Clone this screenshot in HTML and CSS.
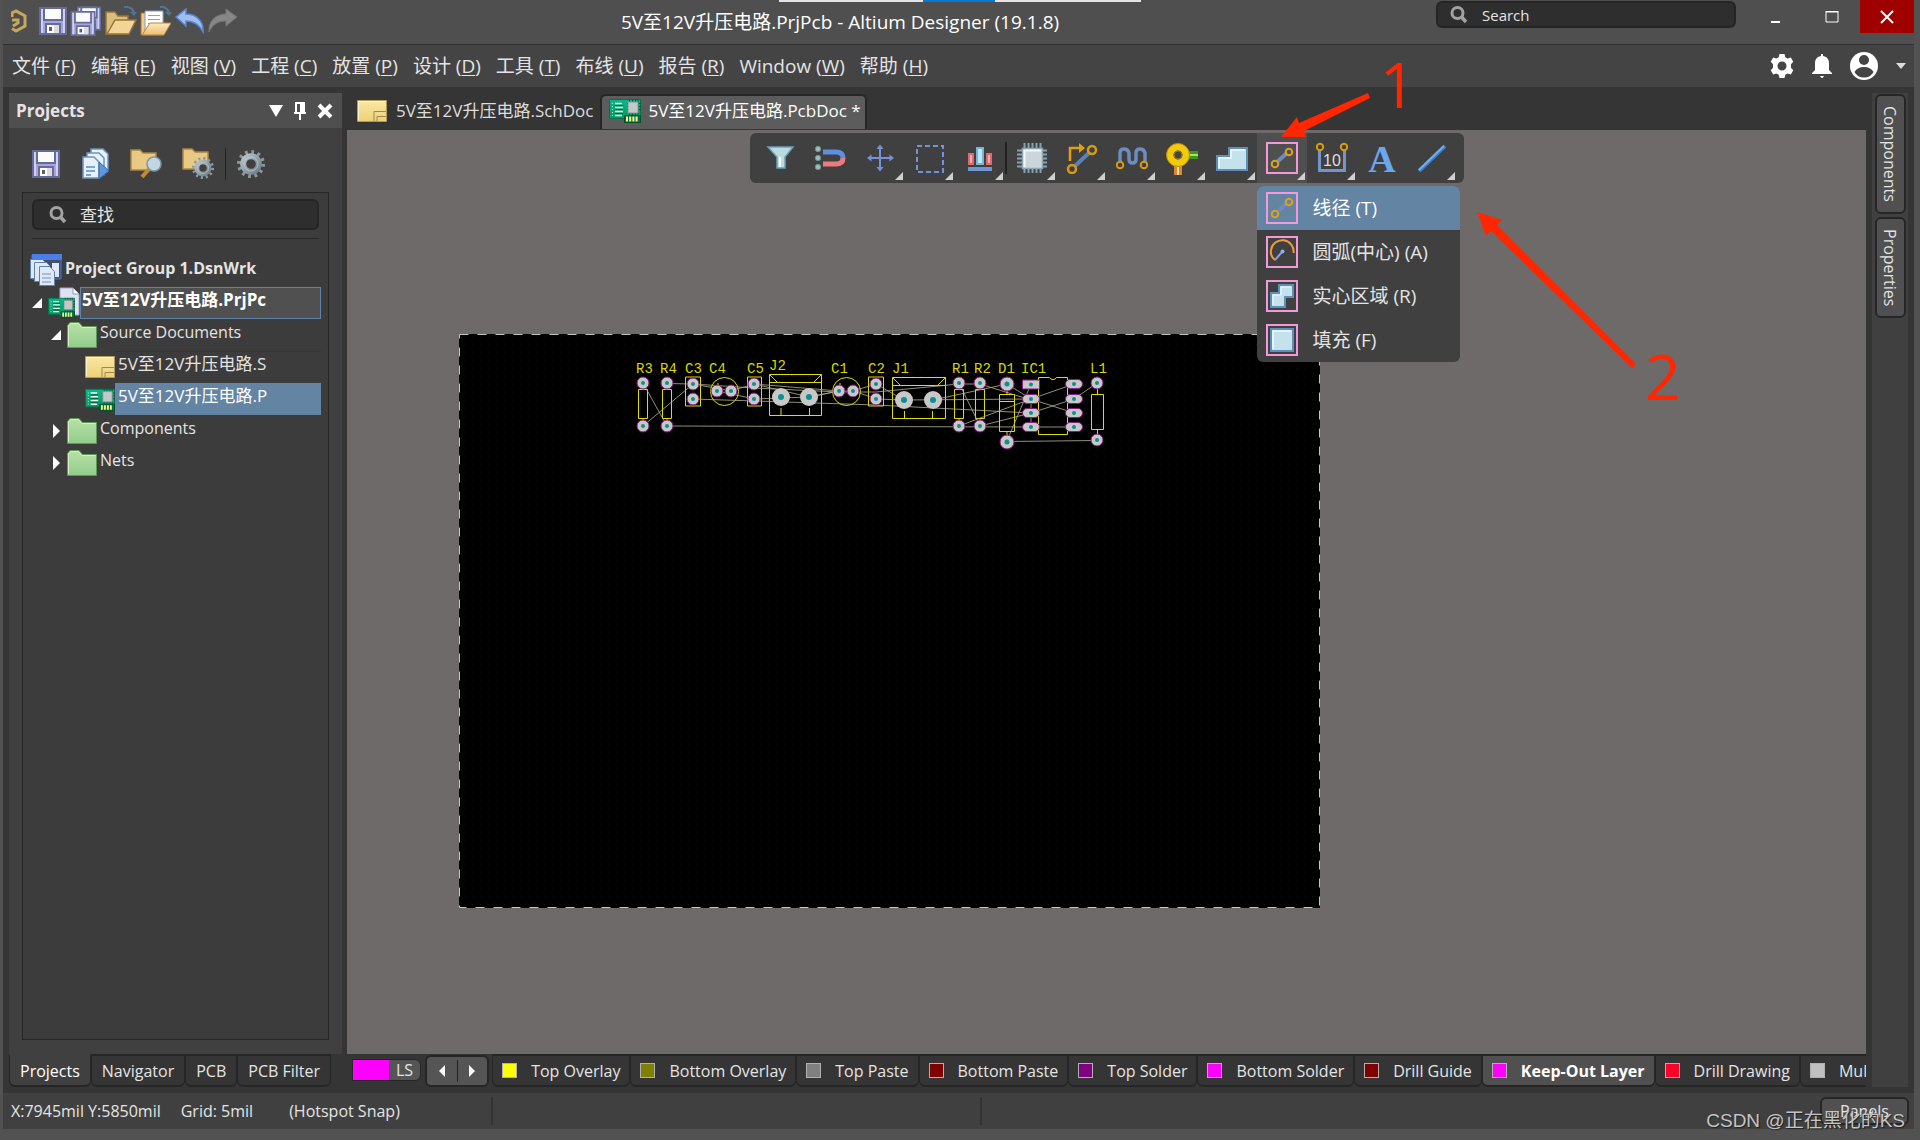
FILE: index.html
```html
<!DOCTYPE html>
<html lang="zh-CN">
<head>
<meta charset="utf-8">
<title>5V至12V升压电路.PrjPcb - Altium Designer (19.1.8)</title>
<link rel="stylesheet" href="styles.css">
</head>
<body>
<svg class="defs" aria-hidden="true">
  <defs>
    <linearGradient id="gSheet" x1="0" y1="0" x2="0" y2="1"><stop offset="0" stop-color="#f8e6a6"/><stop offset="1" stop-color="#edd274"/></linearGradient>
    <linearGradient id="gFolder" x1="0" y1="0" x2="0" y2="1"><stop offset="0" stop-color="#b7dfa8"/><stop offset="1" stop-color="#92cd8a"/></linearGradient>
    <linearGradient id="gPcb" x1="0" y1="0" x2="0" y2="1"><stop offset="0" stop-color="#0cb58c"/><stop offset="1" stop-color="#059a5c"/></linearGradient>
    <linearGradient id="gOpen" x1="0" y1="0" x2="0" y2="1"><stop offset="0" stop-color="#fbe9bd"/><stop offset="1" stop-color="#eebd73"/></linearGradient>
    <linearGradient id="gGear" x1="0" y1="0" x2="1" y2="1"><stop offset="0" stop-color="#b6c2c8"/><stop offset="1" stop-color="#6f8088"/></linearGradient>
    <symbol id="i-save" viewBox="0 0 28 28">
      <path d="M1 1h26v26H1z" fill="#aaa2dc" stroke="#646c98" stroke-width="2"/>
      <path d="M3 2v24M25 2v24" stroke="#d3cdf2" stroke-width="2"/>
      <path d="M5 1h18v12H5z" fill="#fbfbfb" stroke="#646c98" stroke-width="2"/>
      <path d="M7 17h14v10H7z" fill="#fff" stroke="#646c98" stroke-width="2"/>
      <path d="M15 18h5v8h-5z" fill="#dcdcdc"/><path d="M10 20h3v4h-3z" fill="#565e88"/>
    </symbol>
    <symbol id="i-sheet" viewBox="0 0 30 22">
      <path d="M.5.5h29v21H.5z" fill="url(#gSheet)" stroke="#b19b5c"/>
      <path d="M1.500 20V1.500H28" stroke="#fdf3cc" fill="none"/>
      <path d="M17 21v-9.500h12M20 21v-4.500h9" stroke="#a08a4c" fill="none"/>
    </symbol>
    <symbol id="i-pcb" viewBox="0 0 32 25">
      <path d="M.5 1.500h31v19H.5z" fill="url(#gPcb)" stroke="#04724a"/>
      <path d="M3.500 5v14" stroke="#d9fff0" stroke-dasharray="1 2"/>
      <path d="M6 5.500h7M6 9.500h8M6 13.500h8M6 17.500h7" stroke="#eafff6" stroke-width="1.500"/>
      <path d="M6 7.500h8M6 11.500h8M6 15.500h8" stroke="#03583a"/>
      <path d="M20.500 1v18M23.500 1v18M26.500 1v18M29 1v18M18 5.500h14M18 8.500h14M18 11.500h14" stroke="#03583a"/>
      <path d="M19 4h10v11H19z" fill="#c3c9c9" stroke="#8a9494"/>
      <path d="M15.500 17.500h16v7h-16z" fill="#017143" stroke="#024f30"/>
      <path d="M18 18.500v5M21.200 18.500v5M24.400 18.500v5M27.600 18.500v5" stroke="#fbf58a" stroke-width="2"/>
    </symbol>
    <symbol id="i-folder" viewBox="0 0 30 26">
      <path d="M.5 25.500V3.500L3 .5h9l3.500 4h14v21z" fill="url(#gFolder)" stroke="#5d9a57"/>
      <path d="M1.500 24V4l2-2.500h8l3.500 4h13.500" fill="none" stroke="#d3efc6"/>
    </symbol>
    <symbol id="i-search" viewBox="0 0 18 18">
      <circle cx="7.500" cy="7" r="5.500" fill="none" stroke="#a2a2a2" stroke-width="3"/>
      <path d="M11.500 11l4.500 5" stroke="#a2a2a2" stroke-width="3.500"/>
    </symbol>
    <symbol id="i-gear" viewBox="0 0 28 28">
      <circle cx="14" cy="14" r="12" fill="none" stroke="#8b9aa1" stroke-width="4" stroke-dasharray="2.700 3.580"/>
      <circle cx="14" cy="14" r="7.800" fill="none" stroke="url(#gGear)" stroke-width="6"/>
      <circle cx="14" cy="14" r="7" fill="none" stroke="#c6d0d5" stroke-width="1" opacity=".7"/>
    </symbol>
    <symbol id="i-track" viewBox="0 0 32 32">
      <path d="M1 1h30v30H1z" fill="none" stroke="#f19ad9" stroke-width="2"/>
      <path d="M11 20L21 11" stroke="#6d8dbd" stroke-width="4"/>
      <circle cx="23" cy="10" r="3.300" fill="none" stroke="#dca01c" stroke-width="2"/>
      <circle cx="9" cy="22" r="3.300" fill="none" stroke="#dca01c" stroke-width="2"/>
    </symbol>
  </defs>
</svg>

<div class="app">
  <div class="top-strip" aria-hidden="true"><span></span></div>
  <header class="titlebar">
    <div class="quick">
      <svg class="logo" viewBox="0 0 16 24" fill="none" stroke="#c5a75e" stroke-width="3"><path d="M1 8V4l4-2 9 5v10l-9 5-4-2.500"/><path d="M1 11h6v3l-5 3"/></svg>
      <button aria-label="保存"><svg width="28" height="28"><use href="#i-save"/></svg></button>
      <button aria-label="全部保存"><svg width="32" height="30"><use href="#i-save" x="7" y="0" width="24" height="25"/><use href="#i-save" x="0" y="5" width="26" height="25"/></svg></button>
      <button aria-label="打开"><svg width="32" height="30" viewBox="0 0 32 30"><path d="M1 28V6h9l3 4h10v18z" fill="#dcbd7c" stroke="#94763a" stroke-width="1.500"/><path d="M2 28L10 14h21l-7 14z" fill="#f2d596" stroke="#94763a" stroke-width="1.500"/><path d="M19 1q8-1 10 6" fill="none" stroke="#4e7596" stroke-width="2"/><path d="M25 6h7l-3 4z" fill="#4e7596"/></svg></button>
      <button aria-label="打开工程"><svg width="32" height="30" viewBox="0 0 32 30"><path d="M1 29V7h22v22z" fill="#f0c987" stroke="#a5752f"/><path d="M5 5h18v20H5z" fill="#fff" stroke="#8b98bd"/><path d="M8 9.500h12M8 13.500h12M8 17.500h12" stroke="#8e9cc8"/><path d="M2 29L10 17h21l-7 12z" fill="url(#gOpen)" stroke="#b9873d"/><path d="M20 1q7-1 9 6" fill="none" stroke="#4e7596" stroke-width="2"/><path d="M25 6h7l-3 4z" fill="#4e7596"/></svg></button>
      <button aria-label="撤销"><svg width="30" height="26" viewBox="0 0 30 26"><path d="M1 9L11 1v5c11 0 18 8 17 18-4-8-9-11-17-11v5z" fill="#9cbdee" stroke="#5b84cf" stroke-width="1.500"/></svg></button>
      <button aria-label="重做"><svg width="30" height="26" viewBox="0 0 30 26"><path d="M29 9L18 1v5C7 6 0 14 1 24c4-8 9-11 17-11v5z" fill="#868686" stroke="#747474"/></svg></button>
    </div>
    <h1 class="title">5V至12V升压电路.PrjPcb - Altium Designer (19.1.8)</h1>
    <label class="search title-search"><svg width="18" height="18"><use href="#i-search"/></svg><input type="text" placeholder="Search" aria-label="Search"></label>
    <div class="winbtns">
      <button aria-label="最小化"><svg width="14" height="14"><path d="M2 11h9v2H2z" fill="#fff"/></svg></button>
      <button aria-label="最大化"><svg width="14" height="14"><path d="M1 2h12v10H1z" fill="none" stroke="#fff"/><path d="M.5 1.500h13" stroke="#fff"/></svg></button>
      <button class="close" aria-label="关闭"><svg width="14" height="14"><path d="M1 1l12 12M13 1L1 13" stroke="#fff" stroke-width="2"/></svg></button>
    </div>
  </header>

  <nav class="menubar">
    <button>文件 (<u>F</u>)</button><button>编辑 (<u>E</u>)</button><button>视图 (<u>V</u>)</button><button>工程 (<u>C</u>)</button><button>放置 (<u>P</u>)</button><button>设计 (<u>D</u>)</button><button>工具 (<u>T</u>)</button><button>布线 (<u>U</u>)</button><button>报告 (<u>R</u>)</button><button>Window (<u>W</u>)</button><button>帮助 (<u>H</u>)</button>
    <div class="account">
      <button aria-label="设置"><svg width="24" height="24" viewBox="0 0 24 24"><path fill="#fff" fill-rule="evenodd" d="M9.500 0h5l.8 3.200 2.300 1.300 3.200-1 2.500 4.300L21 10.200v3.600l2.300 2.400-2.500 4.300-3.200-1-2.300 1.300-.8 3.200h-5l-.8-3.200-2.300-1.300-3.200 1L.7 16.200 3 13.800v-3.600L.7 7.800l2.500-4.300 3.200 1 2.300-1.300zM12 7.500a4.500 4.500 0 100 9 4.500 4.500 0 000-9z"/></svg></button>
      <button aria-label="通知"><svg width="20" height="24" viewBox="0 0 20 24"><path fill="#fff" d="M9 0h2v2c5 1 6 4 6 8v6l3 3v1H0v-1l3-3v-6c0-4 1-7 6-8zM8 22h4q-2 4-4 0z"/></svg></button>
      <button aria-label="帐户"><svg width="28" height="28" viewBox="0 0 28 28"><circle cx="14" cy="14" r="14" fill="#fff"/><circle cx="14" cy="8" r="5" fill="#444"/><path d="M4.500 20q3-5 9.500-5t9.500 5q-3 5.500-9.500 5.500T4.500 20z" fill="#444"/></svg></button>
      <button aria-label="帐户菜单"><svg width="10" height="6"><path d="M0 0h10L5 6z" fill="#ddd"/></svg></button>
    </div>
  </nav>

  <main class="work">
    <aside class="left">
      <section class="panel">
        <div class="panel-head">
          <h2>Projects</h2>
          <button aria-label="菜单"><svg width="14" height="12"><path d="M0 0h14L7 12z" fill="#fff"/></svg></button>
          <button aria-label="固定"><svg width="12" height="18"><path d="M1 0h10v10h1v2H7v6H5v-6H0v-2h1zM3 2v8h3V2z" fill="#fff" fill-rule="evenodd"/></svg></button>
          <button aria-label="关闭面板"><svg width="16" height="16"><path d="M2 2l12 12M14 2L2 14" stroke="#fff" stroke-width="4"/></svg></button>
        </div>
        <div class="panel-tools">
          <button aria-label="保存文档"><svg width="28" height="28"><use href="#i-save"/></svg></button>
          <button aria-label="编译工程"><svg width="30" height="32" viewBox="-2 0 30 32"><g fill="#e6f1f9" stroke="#6d93bd" stroke-width="1.500"><path d="M9 1h12l5 5v17H9z"/><path d="M5 5h12l5 5v17H5z"/><path d="M1 9h11l5 5v16H1z"/></g><path d="M4 19h9M4 23h9M4 27h5" stroke="#5b8ec2" stroke-width="1.500"/><path d="M17 14l10 9-10 8z" fill="#5f97dc" stroke="#3465a8"/></svg></button>
          <button aria-label="浏览"><svg width="32" height="30" viewBox="0 0 32 30"><path d="M1 21V1h9l3 3h13v17z" fill="#eac983" stroke="#a88548" stroke-width="1.500"/><path d="M20 19l-8 9" stroke="#c0883a" stroke-width="4"/><circle cx="24" cy="15" r="7" fill="#c3d6e4" stroke="#7f95a5" stroke-width="1.500"/></svg></button>
          <button aria-label="工程选项"><svg width="32" height="32" viewBox="0 0 32 32"><path d="M1 21V1h9l3 3h13v17z" fill="#eac983" stroke="#a88548" stroke-width="1.500"/><circle cx="21" cy="20" r="4" fill="#404040"/><use href="#i-gear" x="10" y="9" width="22" height="22"/></svg></button>
          <i class="vline"></i>
          <button aria-label="设置"><svg width="28" height="28"><use href="#i-gear"/></svg></button>
        </div>
        <div class="panel-body">
          <label class="search"><svg width="18" height="18"><use href="#i-search"/></svg><input type="text" placeholder="查找" aria-label="查找"></label>
          <ul class="tree">
            <li class="row group"><svg class="ic" width="32" height="32" viewBox="0 0 32 32"><path d="M2 1h29v24H2z" fill="#44506a" stroke="#4a78d4"/><path d="M2 0h30v6H2z" fill="#4b7fe6"/><path d="M22 9h7v14h-7z" fill="#dfe8f4"/><g fill="#dfe9f5" stroke="#6282ac"><path d="M.5 5.500h12l3 3v16H.5z"/><path d="M4.500 8.500h12l3 3v16h-15z"/><path d="M9.500 12.500h10l5 5v14h-15z"/></g><path d="M12 20h9M12 24h9M12 28h9" stroke="#6d8fc0"/></svg><span class="name">Project Group 1.DsnWrk</span></li>
            <li class="row l1"><svg class="tw" width="10" height="10"><path d="M10 0v10H0z" fill="#fff"/></svg><svg class="ic" width="32" height="32" viewBox="0 0 32 32"><path d="M12 1h13l6 6v21H12z" fill="#dde3f3" stroke="#a4acc8"/><path d="M25 1v6h6" fill="#fff" stroke="#8e96b8"/><use href="#i-pcb" x="0" y="10" width="27" height="21"/></svg><span class="name selbox"><span>5V至12V升压电路.PrjPcb</span></span></li>
            <li class="row l2"><svg class="tw" width="10" height="10"><path d="M10 0v10H0z" fill="#fff"/></svg><svg class="ic" width="30" height="26"><use href="#i-folder"/></svg><span class="name">Source Documents</span></li>
            <li class="row l3"><svg class="ic" width="30" height="22"><use href="#i-sheet"/></svg><span class="name"><span>5V至12V升压电路.SchDoc</span></span></li>
            <li class="row l3"><svg class="ic" width="30" height="25"><use href="#i-pcb"/></svg><span class="name active"><span>5V至12V升压电路.PcbDoc</span></span></li>
            <li class="row l2"><svg class="tw" width="10" height="14"><path d="M2 0l7 7-7 7z" fill="#fff"/></svg><svg class="ic" width="30" height="26"><use href="#i-folder"/></svg><span class="name">Components</span></li>
            <li class="row l2"><svg class="tw" width="10" height="14"><path d="M2 0l7 7-7 7z" fill="#fff"/></svg><svg class="ic" width="30" height="26"><use href="#i-folder"/></svg><span class="name">Nets</span></li>
          </ul>
        </div>
      </section>
      <div class="tabs-bottom"><button class="on">Projects</button><button>Navigator</button><button>PCB</button><button>PCB Filter</button></div>
    </aside>

    <section class="center">
      <div class="doctabs">
        <button><svg width="30" height="22"><use href="#i-sheet"/></svg>5V至12V升压电路.SchDoc</button>
        <button class="on"><svg width="32" height="25"><use href="#i-pcb"/></svg>5V至12V升压电路.PcbDoc *</button>
      </div>
      <div class="canvas">
        <svg class="board" width="861" height="574" viewBox="459 334 861 574">
          <defs>
            <pattern id="dots" width="8" height="8" patternUnits="userSpaceOnUse"><path d="M0 0h1v1H0z" fill="#0d0d0d"/></pattern>
            <g id="pad"><circle r="6" fill="#c8c8c8" stroke="#8a1a8a"/><circle r="2" fill="#0a9090"/></g>
            <g id="padL"><circle r="9" fill="#c8c8c8"/><circle r="3" fill="#0a9090"/></g>
            <g id="padM"><circle r="7" fill="#c8c8c8" stroke="#8a1a8a"/><circle r="2.500" fill="#0a9090"/></g>
            <g id="padO"><rect x="-8.500" y="-4.500" width="17" height="9" rx="4.500" fill="#c8c8c8" stroke="#8a1a8a"/><circle r="2" fill="#0a9090"/></g>
          </defs>
          <path d="M459 334h861v574H459z" fill="#000"/>
          <path d="M459 334h861v574H459z" fill="url(#dots)"/>
          <path d="M459.500 334.500h860v573h-860z" fill="none" stroke="#c4c4c4" stroke-dasharray="9 9"/>
          <g fill="none" stroke="#dede00">
            <path d="M638.500 389.500h9v29h-9zM643 383v6M643 419v6M662.500 389.500h9v29h-9zM667 383v6M667 419v6"/>
            <path d="M685.500 377h15v29h-15zM747.500 377h14v29h-14zM868.500 377h15v29h-15z"/>
            <circle cx="724.500" cy="391.500" r="14"/><circle cx="846.500" cy="391.500" r="14"/>
            <path d="M718 383v3M840 383v3"/>
            <path d="M769.500 374.500h52v41h-52zM769.500 382.500h52M769.500 374.500l8 8M821.500 374.500l-8 8M781 408v7M809.500 408v7"/>
            <path d="M892.500 377.500h53v41h-53zM892.500 385.500h53M892.500 377.500l8 8M945.500 377.500l-8 8M904.500 411v7M932.500 411v7"/>
            <path d="M954.500 389.500h9v29h-9zM959 383v6M959 419v6M975.500 389.500h9v29h-9zM980 383v6M980 419v6"/>
            <path d="M999.500 394.500h15v37h-15zM999.500 401.500h15M1007 389v5M1007 432v5"/>
            <path d="M1038.500 377.500h11a4 4 0 007 0h11v57h-29z"/>
            <path d="M1091.500 394.500h12v35h-12zM1097.500 388v6M1097.500 430v6"/>
          </g>
          <g fill="none" stroke="#b4b48c" stroke-opacity=".8">
            <path d="M643 383l24 43M643 426l50-42M667 383.500l26 .5 61 4 85 4 37 0 83-8 21 0 51 16M693 384l38 7 23-7 55 13 30-6 14 0 23-7 28 16M693 399l62 2 121 4 155 8M717 391l38 8 54-2 30-6M854 391l22 8 28 1 127-1M754 384l85 7M933 400l74-16M667 426l364 1M1031 427h43M959 383l21 43M959 426l72-27 43-15M980 426l51-13 43-14 23-16M1031 399l43 14M1031 384l-24 57M1007 384l24 15v28M1007 441.500l90-1"/>
          </g>
          <use href="#pad" x="643" y="383"/><use href="#pad" x="643" y="426"/><use href="#pad" x="667" y="383"/><use href="#pad" x="667" y="426"/>
          <use href="#pad" x="693" y="384"/><use href="#pad" x="693" y="399"/><use href="#pad" x="717" y="391"/><use href="#pad" x="731" y="391"/>
          <use href="#pad" x="754" y="384"/><use href="#pad" x="754" y="399"/><use href="#padL" x="781" y="397"/><use href="#padL" x="809" y="397"/>
          <use href="#pad" x="839" y="391"/><use href="#pad" x="853" y="391"/><use href="#pad" x="876" y="384"/><use href="#pad" x="876" y="399"/>
          <use href="#padL" x="904" y="400"/><use href="#padL" x="933" y="400"/>
          <use href="#pad" x="959" y="383"/><use href="#pad" x="959" y="426"/><use href="#pad" x="980" y="383"/><use href="#pad" x="980" y="426"/>
          <use href="#padM" x="1007" y="384"/><use href="#padM" x="1007" y="442"/>
          <path d="M1022.500 380h17v9h-17z" fill="#c8c8c8" stroke="#8a1a8a"/><circle cx="1031" cy="384.500" r="2" fill="#0a9090"/>
          <use href="#padO" x="1031" y="399"/><use href="#padO" x="1031" y="413"/><use href="#padO" x="1031" y="427"/>
          <use href="#padO" x="1074" y="384"/><use href="#padO" x="1074" y="399"/><use href="#padO" x="1074" y="413"/><use href="#padO" x="1074" y="427"/>
          <use href="#pad" x="1097" y="383"/><use href="#pad" x="1097" y="440"/>
          <g class="ref">
            <text x="636" y="373">R3</text><text x="660" y="373">R4</text><text x="685" y="373">C3</text><text x="709" y="373">C4</text><text x="747" y="373">C5</text><text x="769" y="370">J2</text><text x="831" y="373">C1</text><text x="868" y="373">C2</text><text x="892" y="373">J1</text><text x="952" y="373">R1</text><text x="974" y="373">R2</text><text x="998" y="373">D1</text><text x="1021" y="373">IC1</text><text x="1090" y="373">L1</text>
          </g>
        </svg>

        <div class="toolbar">
          <button aria-label="过滤器"><svg width="32" height="32" viewBox="0 0 32 32"><path d="M4 5h25l-8 10v11h-8V15z" fill="#b9dbe0" stroke="#6fa0b8" stroke-width="1.500"/><path d="M16 15v10" stroke="#f2ffff" stroke-width="2"/></svg></button>
          <button aria-label="捕捉"><svg width="32" height="32" viewBox="0 0 32 32"><g fill="#9cbcbc" stroke="#6c9090"><circle cx="4" cy="7" r="2.700"/><circle cx="4" cy="16" r="2.700"/><circle cx="4" cy="25" r="2.700"/></g><path d="M9 10h13q7 0 7 6" fill="none" stroke="#5d8ee0" stroke-width="5"/><path d="M9 22h13q7 0 7-6" fill="none" stroke="#ec7a7e" stroke-width="5"/></svg></button>
          <button class="more" aria-label="移动"><svg width="32" height="32" viewBox="0 0 32 32"><path d="M16 5v23M5 16h23" stroke="#7492dc" stroke-width="2"/><path d="M16 2.500l3.500 4.500h-7zM16 29.500l3.500-4.500h-7zM3 16l4.500-3.500v7zM30 16l-4.500-3.500v7z" fill="#7492dc"/></svg></button>
          <button class="more" aria-label="选择"><svg width="32" height="32" viewBox="0 0 32 32"><path d="M3 4h26v26H3z" fill="none" stroke="#7492dc" stroke-width="2" stroke-dasharray="5 3"/></svg></button>
          <button class="more" aria-label="对齐"><svg width="32" height="32" viewBox="0 0 32 32"><path d="M5 12h4v10H5zM23 12h4v10h-4z" fill="#f7adaf" stroke="#e0696d" stroke-width="2"/><path d="M13 6h6v16h-6z" fill="#bfe6f5" stroke="#78b4d8" stroke-width="2"/><path d="M4 25h24v4H4z" fill="#6f97d8"/></svg></button>
          <i class="vline"></i>
          <button class="more" aria-label="器件"><svg width="32" height="32" viewBox="0 0 32 32"><path d="M8.500 1v30M12.500 1v30M16.500 1v30M20.500 1v30M24.500 1v30M1 8.500h30M1 12.500h30M1 16.500h30M1 20.500h30M1 24.500h30" stroke="#85a3b3" stroke-width="2"/><path d="M6.500 6.500h20v20h-20z" fill="#ccd4dc" stroke="#90a4ae" stroke-width="1.500"/><path d="M8.500 25V8.500H25" fill="none" stroke="#f2f7fa" stroke-width="2"/></svg></button>
          <button class="more" aria-label="布线"><svg width="32" height="32" viewBox="0 0 32 32"><path d="M9 24L24 10" stroke="#5c7fb4" stroke-width="4"/><circle cx="26" cy="8" r="4" fill="none" stroke="#d99c10" stroke-width="2.500"/><circle cx="6" cy="27" r="4" fill="none" stroke="#d99c10" stroke-width="2.500"/><path d="M4 19V6h11" fill="none" stroke="#e0a010" stroke-width="2.500"/><path d="M13 1l6 5-6 5z" fill="#e0a010"/></svg></button>
          <button class="more" aria-label="长度调整"><svg width="32" height="32" viewBox="0 0 32 32"><path d="M4 20V11q0-4 4-4t5 4v6q0 4 3.500 4t3.500-4v-6q0-4 4-4t5 4v9" fill="none" stroke="#6c8dbe" stroke-width="3.500"/><circle cx="4" cy="23" r="3.300" fill="#404040" stroke="#d99c10" stroke-width="2"/><circle cx="28" cy="23" r="3.300" fill="#404040" stroke="#d99c10" stroke-width="2"/></svg></button>
          <button class="more" aria-label="过孔"><svg width="32" height="34" viewBox="0 0 32 34"><path d="M8 22h8v12H8z" fill="#d98a2c"/><path d="M11 22h2v12h-2z" fill="#fbdcae"/><path d="M22 10h10v8H22z" fill="#3c9a14"/><path d="M22 13h10v2H22z" fill="#a8e07a"/><circle cx="12" cy="14" r="8" fill="none" stroke="#f2ca0a" stroke-width="7"/><circle cx="12" cy="14" r="11.500" fill="none" stroke="#c08c06"/><circle cx="12" cy="14" r="4" fill="#444" stroke="#a47a06"/></svg></button>
          <button class="more" aria-label="铺铜"><svg width="32" height="32" viewBox="0 0 32 32"><path d="M1 28V14h12V6h18v22z" fill="#c3e2ec" stroke="#5f8fb8" stroke-width="2"/><path d="M3 26V16h12V8h14" fill="none" stroke="#f0fbff" stroke-width="1.500"/></svg></button>
          <div class="drop">
            <button class="more open" aria-label="放置线径"><svg width="32" height="32"><use href="#i-track"/></svg></button>
            <div class="menu">
              <button class="hot"><svg width="32" height="32"><use href="#i-track"/></svg>线径 (T)</button>
              <button><svg width="32" height="32" viewBox="0 0 32 32"><path d="M1 1h30v30H1z" fill="none" stroke="#f19ad9" stroke-width="2"/><path d="M9 24Q4 20 5 14A11 11 0 0127.500 17" fill="none" stroke="#ec9a3c" stroke-width="2"/><path d="M16 16l-7 8" stroke="#7f9fe4" stroke-width="2"/><circle cx="16.500" cy="15.500" r="2" fill="#8fb0f0"/></svg>圆弧(中心) (A)</button>
              <button><svg width="32" height="32" viewBox="0 0 32 32"><path d="M1 1h30v30H1z" fill="none" stroke="#f19ad9" stroke-width="2"/><path d="M5 27V13h8V5h14v12h-8v10z" fill="#c3e2ec" stroke="#5f8fb8" stroke-width="2"/><path d="M7 25V15h8V7h10" fill="none" stroke="#f0fbff"/></svg>实心区域 (R)</button>
              <button><svg width="32" height="32" viewBox="0 0 32 32"><path d="M1 1h30v30H1z" fill="none" stroke="#f19ad9" stroke-width="2"/><path d="M5 5h22v22H5z" fill="#c3e2ec" stroke="#5f8fb8" stroke-width="2"/><path d="M7 25V7h18" fill="none" stroke="#f0fbff" stroke-width="1.500"/></svg>填充 (F)</button>
            </div>
          </div>
          <button class="more" aria-label="尺寸"><svg width="32" height="32" viewBox="0 0 32 32"><path d="M3.500 8v20.500h25V8" fill="none" stroke="#7396c8" stroke-width="3"/><circle cx="4" cy="5" r="3.200" fill="#404040" stroke="#d99c10" stroke-width="2"/><circle cx="28" cy="5" r="3.200" fill="#404040" stroke="#d99c10" stroke-width="2"/><text x="16" y="24" class="dim">10</text></svg></button>
          <button aria-label="字符串"><svg width="32" height="32" viewBox="0 0 32 32"><text x="16" y="30" class="bigA">A</text></svg></button>
          <button class="more" aria-label="直线"><svg width="32" height="32" viewBox="0 0 32 32"><path d="M3 29L29 4" stroke="#3d7cc4" stroke-width="4"/><path d="M3 28L28 4" stroke="#74aef0" stroke-width="2"/></svg></button>
          <svg class="notes" width="760" height="360" viewBox="1249 60 760 360" aria-hidden="true">
            <path d="M1281 137l16-20 2 6 69-30 2 5-66 33 2 6zM1477 212l25 8-5 5 139 139-4 4-141-137-5 5z"/>
            <text x="1380" y="108">1</text><text x="1645" y="400">2</text>
          </svg>
        </div>
      </div>
      <div class="layers">
        <button class="ls"><i></i><span>LS</span></button>
        <div class="nav"><button aria-label="上一层"><svg width="8" height="14"><path d="M7 1v12L1 7z" fill="#fff"/></svg></button><i class="vline"></i><button aria-label="下一层"><svg width="8" height="14"><path d="M1 1v12l6-6z" fill="#fff"/></svg></button></div>
        <div class="layertabs">
          <button><i class="c-yellow"></i>Top Overlay</button><button><i class="c-olive"></i>Bottom Overlay</button><button><i class="c-gray"></i>Top Paste</button><button><i class="c-maroon"></i>Bottom Paste</button><button><i class="c-purple"></i>Top Solder</button><button><i class="c-magenta"></i>Bottom Solder</button><button><i class="c-maroon"></i>Drill Guide</button><button class="on"><i class="c-magenta"></i>Keep-Out Layer</button><button><i class="c-red"></i>Drill Drawing</button><button><i class="c-silver"></i>Multi-Layer</button>
        </div>
      </div>
    </section>

    <aside class="right"><button>Components</button><button>Properties</button></aside>
  </main>

  <footer class="status">
    <div class="cell first"><span class="coord">X:7945mil Y:5850mil</span><span class="grid">Grid: 5mil</span><span>(Hotspot Snap)</span></div>
    <div class="cell second"></div>
    <button class="panels">Panels</button>
    <div class="watermark">CSDN @正在黑化的KS</div>
  </footer>
</div>
</body>
</html>
```
FILE: styles.css
```css
* { box-sizing: border-box; }
body {
  margin: 0;
  background: #4f4f4f;
  color: #e4e4e4;
  font: 16px/24px "Open Sans", "Noto Sans CJK SC", sans-serif;
}
button {
  display: flex;
  align-items: center;
  justify-content: center;
  margin: 0;
  padding: 0;
  border: 0;
  background: none;
  color: inherit;
  font: inherit;
  white-space: nowrap;
}
svg { display: block; flex: none; }
h1, h2 { margin: 0; font-size: inherit; }
.defs { position: absolute; width: 0; height: 0; }
.app {
  position: relative;
  display: flex;
  flex-direction: column;
  min-height: 100vh;
  border: solid #525252;
  border-width: 0 6px 11px 3px;
  background: #353535;
}
.top-strip {
  position: absolute;
  top: 0;
  left: 776px;
  width: 362px;
  height: 2px;
  background: #e4e4e4;
}
.top-strip span {
  display: block;
  width: 72px;
  height: 2px;
  margin-left: 144px;
  background: #0a78d6;
}

/* Title bar */
.titlebar {
  display: flex;
  align-items: flex-start;
  height: 45px;
  background: #4f4f4f;
  border-bottom: 1px solid #303030;
}
.quick { display: flex; align-items: center; gap: 3px; height: 42px; padding-left: 8px; }
.logo { width: 16px; height: 24px; margin-right: 9px; }
.title {
  flex: 1;
  padding-left: 6px;
  text-align: center;
  font-weight: 400;
  font-size: 19px;
  line-height: 44px;
  white-space: nowrap;
  color: #fff;
}
.search {
  display: flex;
  align-items: center;
  height: 31px;
  padding-left: 15px;
  gap: 13px;
  background: #2e2e2e;
  border: 2px solid #252525;
  border-radius: 6px;
}
.search input {
  flex: 1;
  min-width: 0;
  padding: 0;
  border: 0;
  background: none;
  color: #e4e4e4;
  font: inherit;
  font-size: 17px;
  outline: 0;
}
.search input::placeholder { color: #e4e4e4; opacity: 1; }
.title-search { width: 300px; height: 27px; margin-top: 1px; padding-left: 12px; gap: 14px; }
.title-search input { font-size: 15px; line-height: 20px; }
.winbtns { display: flex; margin-left: 12px; }
.winbtns button { width: 56px; height: 33px; }
.winbtns .close { width: 54px; background: #a00000; }

/* Menu bar */
.menubar {
  display: flex;
  align-items: center;
  gap: 15px;
  height: 42px;
  padding-left: 9px;
  background: #444;
  font-size: 19px;
}
.menubar u { text-underline-offset: 2px; text-decoration-thickness: 1px; }
.menubar > button { display: block; }
.account { display: flex; align-items: center; gap: 18px; margin-left: auto; padding-right: 8px; }

/* Work area */
.work { display: flex; flex: 1; }
.left { display: flex; flex-direction: column; width: 333px; margin: 6px 5px 0 6px; }
.panel { display: flex; flex: 1; flex-direction: column; background: #404040; }
.panel-head {
  display: flex;
  align-items: center;
  gap: 11px;
  height: 35px;
  padding: 0 9px 0 7px;
  background: #4f4f4f;
}
.panel-head h2 { flex: 1; font-size: 17px; }
.panel-tools { display: flex; align-items: center; height: 64px; padding: 8px 0 0 23px; gap: 20px; }
.vline { width: 1px; height: 32px; background: #222; }
.panel-tools .vline { margin: 0 -9px; }
.panel-body {
  flex: 1;
  margin: 0 13px 14px;
  padding: 6px 9px;
  border: 1px solid #262626;
  background: #3c3c3c;
}
.tree { margin: 8px 0 0; padding: 13px 0 0; border-top: 1px solid #282828; list-style: none; }
.row { display: flex; align-items: center; height: 32px; margin-right: -2px; }
.group { height: 35px; margin-left: -2px; font-weight: 700; }
.group .name { line-height: 28px; }
.l2 { padding-left: 19px; }
.l3 { padding-left: 53px; }
.tw { margin-right: 6px; }
.name { flex: 1; height: 32px; min-width: 0; padding-left: 3px; line-height: 26px; overflow: hidden; }
.name > span { display: block; margin-right: 54px; overflow: hidden; white-space: nowrap; font-size: 17px; line-height: 24px; }
.selbox { border: 1px solid #5d83a8; background: #505050; color: #fff; font-weight: 700; padding-left: 1px; }
.l3 .name { border-top: 1px solid #353535; }
.l3 .active { background: #6384a3; border-color: #6384a3; color: #fff; }
.tabs-bottom { display: flex; height: 39px; align-items: flex-start; }
.tabs-bottom button {
  height: 33px;
  padding: 0 10px;
  border: solid #262626;
  border-width: 2px 1px 2px;
  border-radius: 0 0 6px 6px;
}
.tabs-bottom .on { background: #404040; border-top-color: #404040; color: #fff; }

.center { display: flex; flex: 1; flex-direction: column; min-width: 0; }
.doctabs { display: flex; height: 43px; padding: 7px 0 0 2px; font-size: 17px; }
.doctabs button { gap: 9px; height: 35px; padding: 0 6px 2px 8px; color: #ddd; }
.doctabs .on {
  gap: 8px;
  padding: 0 4px 4px 7px;
  background: #5c5c5c;
  border: 2px solid #262626;
  border-width: 2px 2px 0;
  border-radius: 6px 6px 0 0;
  color: #fff;
}
.canvas { position: relative; flex: 1; background: #6e6a69; }
.board { position: absolute; left: 112px; top: 204px; }
.ref { fill: #d8d800; font: 14px "Liberation Mono", monospace; }
.toolbar {
  position: relative;
  display: flex;
  align-items: center;
  width: max-content;
  margin: 3px auto 0;
  padding: 0 7px 0 5px;
  background: #404040;
  border-radius: 6px;
}
.toolbar button { position: relative; }
.toolbar > button, .drop > button { width: 50px; height: 50px; }
.toolbar .vline { width: 2px; }
.more::after {
  content: "";
  position: absolute;
  right: 2px;
  bottom: 3px;
  border: 4px solid transparent;
  border-right-color: #cfcfcf;
  border-bottom-color: #cfcfcf;
}
.drop { position: relative; }
.drop .open { background: #4f4f4f; }
.menu {
  position: absolute;
  left: 0;
  top: 53px;
  width: 203px;
  overflow: hidden;
  border-radius: 6px;
  background: #404040;
}
.menu button { justify-content: flex-start; gap: 15px; width: 100%; height: 44px; padding-left: 9px; font-size: 19px; }
.menu .hot { background: #6384a3; color: #fff; }
.dim { font: 16px "Liberation Sans", sans-serif; fill: #ddd; text-anchor: middle; }
.bigA { font: bold 38px "Liberation Serif", serif; fill: #6ca6ec; text-anchor: middle; }
.notes { position: absolute; left: 499px; top: -73px; pointer-events: none; fill: #ff2600; }
.notes text { font: 62px "Open Sans", sans-serif; }

/* Layer tabs */
.layers { display: flex; height: 39px; }
.ls { height: 22px; margin: 5px 4px 0 5px; border: 1px solid #262626; border-radius: 0 6px 6px 0; background: #555; }
.ls i { width: 36px; height: 20px; background: #f0f; }
.ls span { padding: 0 7px; }
.nav { display: flex; align-items: center; width: 64px; height: 32px; margin: 1px 3px 0 0; border: 2px solid #262626; border-radius: 6px; background: #555; }
.nav button { flex: 1; height: 28px; }
.nav .vline { height: 22px; }
.layertabs { display: flex; flex: 1; min-width: 0; height: 33px; overflow: hidden; }
.layertabs button {
  flex: none;
  gap: 14px;
  padding: 0 9px;
  border: solid #262626;
  border-width: 2px 1px;
  border-radius: 0 0 6px 6px;
}
.layertabs i { width: 15px; height: 15px; border: 1px solid #b0b0b0; }
.layertabs .on { background: #505050; color: #fff; font-weight: 700; }
.c-yellow { background: #ff0; }
.c-olive { background: #808000; }
.c-gray { background: #808080; }
.c-maroon { background: #800000; }
.c-purple { background: #800080; }
.c-magenta { background: #f0f; }
.c-red { background: #ff0028; }
.c-silver { background: #c0c0c0; }

.right { display: flex; flex-direction: column; align-items: center; gap: 3px; width: 36px; margin: 6px 6px 6px; padding-top: 1px; background: #404040; }
.right button {
  width: 31px;
  padding: 10px 0;
  border: 2px solid #262626;
  border-radius: 6px;
  background: #505050;
  writing-mode: vertical-rl;
}

/* Status bar */
.status { position: relative; display: flex; align-items: center; height: 36px; padding-right: 5px; background: #404040; }
.cell { display: flex; height: 28px; align-items: center; border-right: 2px solid #333; }
.first { width: 490px; padding-left: 8px; }
.second { width: 489px; }
.coord { margin-right: 20px; }
.grid { margin-right: 36px; }
.panels { width: 89px; height: 28px; margin-left: auto; border: 2px solid #262626; border-radius: 6px; background: #505050; }
.watermark {
  position: absolute;
  right: 9px;
  bottom: -4px;
  color: #c4c4c4;
  font: 19px/24px "Liberation Sans", "Noto Sans CJK SC", sans-serif;
  text-shadow: 1px 1px 1px #222;
}
```
